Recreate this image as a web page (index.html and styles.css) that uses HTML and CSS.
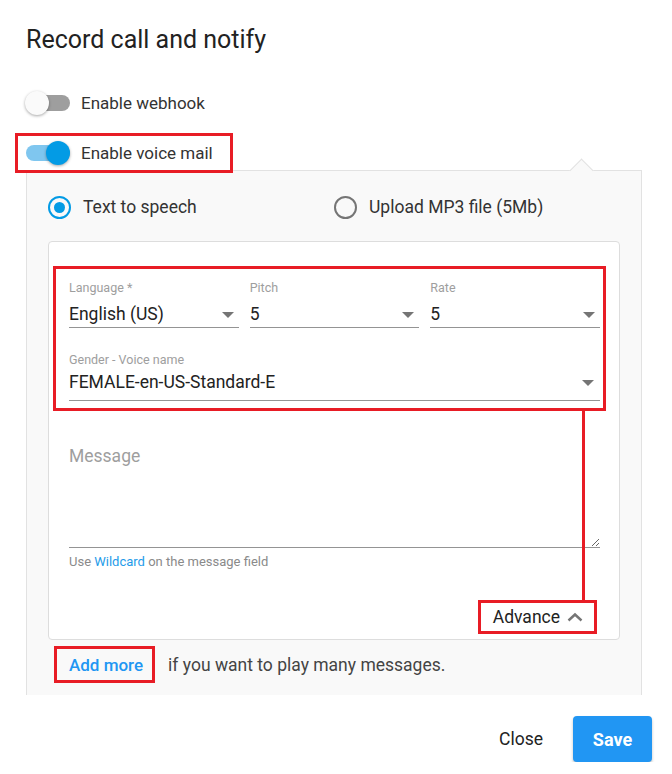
FILE: index.html
```html
<!DOCTYPE html>
<html lang="en">

<head>
    <meta charset="UTF-8">
    <meta name="viewport" content="width=device-width, initial-scale=1.0">
    <title>Record call and notify</title>
    <link rel="stylesheet" href="styles.css">
</head>

<body>
    <div class="dialog">
        <h2 class="title">Record call and notify</h2>

        <label class="toggle-row">
            <span class="switch"><span class="track"></span><span class="knob"></span></span>
            Enable webhook
        </label>
        <label class="toggle-row on marked">
            <span class="switch"><span class="track"></span><span class="knob"></span></span>
            Enable voice mail
        </label>

        <div class="panel">
            <div class="radios">
                <label class="radio checked"><span class="circle"></span>Text to speech</label>
                <label class="radio"><span class="circle"></span>Upload MP3 file (5Mb)</label>
            </div>

            <div class="card">
                <div class="fields marked">
                    <div class="field-row">
                        <div class="field">
                            <div class="field-label">Language *</div>
                            <div class="select">English (US)<span class="caret"></span></div>
                        </div>
                        <div class="field">
                            <div class="field-label">Pitch</div>
                            <div class="select">5<span class="caret"></span></div>
                        </div>
                        <div class="field">
                            <div class="field-label">Rate</div>
                            <div class="select">5<span class="caret"></span></div>
                        </div>
                    </div>
                    <div class="field voice">
                        <div class="field-label">Gender - Voice name</div>
                        <div class="select">FEMALE-en-US-Standard-E<span class="caret"></span></div>
                    </div>
                </div>

                <textarea class="message" placeholder="Message"></textarea>
                <div class="hint">Use <a href="#">Wildcard</a> on the message field</div>

                <div class="advance-row">
                    <span class="advance marked">Advance
                        <svg width="16" height="10" viewBox="0 0 16 10">
                            <polyline points="1.5,8.5 8,2.5 14.5,8.5" fill="none" stroke="#757575" stroke-width="2.4" />
                        </svg>
                    </span>
                </div>
            </div>

            <div class="add-row">
                <a href="#" class="add-more marked">Add more</a>
                <span>if you want to play many messages.</span>
            </div>
        </div>

        <div class="footer">
            <button class="btn-close">Close</button>
            <button class="btn-save">Save</button>
        </div>
    </div>
</body>

</html>
```

FILE: styles.css
```css
body {
    margin: 0;
    font-family: Roboto, "Liberation Sans", Arial, sans-serif;
    color: #333;
    background: #fff;
}

.dialog {
    padding: 25px 20px 0 26px;
}

.title {
    margin: 0;
    font-size: 25px;
    line-height: 30px;
    font-weight: 400;
    color: #222;
}

.marked {
    outline: 3px solid #e81c25;
}

/* switches */
.toggle-row {
    display: flex;
    align-items: center;
    height: 34px;
    font-size: 17px;
    color: #333;
}

.toggle-row:first-of-type {
    margin-top: 31px;
}

.toggle-row + .toggle-row {
    margin-top: 16px;
}

.toggle-row.marked {
    width: 204px;
    margin-left: -8px;
    padding-left: 8px;
    position: relative;
    z-index: 2;
}

.switch {
    position: relative;
    width: 44px;
    height: 24px;
    margin-right: 11px;
}

.track {
    position: absolute;
    left: 0;
    top: 4px;
    width: 44px;
    height: 16px;
    border-radius: 8px;
    background-color: #9e9e9e;
}

.knob {
    position: absolute;
    left: -1px;
    top: 0;
    width: 24px;
    height: 24px;
    border-radius: 50%;
    background-color: #fafafa;
    box-shadow: 0 1px 3px rgba(0, 0, 0, 0.35);
}

.on .track {
    background-color: #7fc6ef;
}

.on .knob {
    left: 20px;
    background-color: #039be5;
}

/* panel */
.panel {
    position: relative;
    margin-right: 10px;
    padding: 24px 21px 15px;
    background-color: #f9f9f9;
    border: 1px solid #e2e2e2;
    border-bottom: none;
}

.panel::before {
    content: '';
    position: absolute;
    top: -9px;
    left: 546px;
    width: 16px;
    height: 16px;
    background-color: #f9f9f9;
    border-top: 1px solid #e2e2e2;
    border-left: 1px solid #e2e2e2;
    transform: rotate(45deg);
}

.radios {
    display: flex;
    height: 24px;
    font-size: 17.5px;
    color: #333;
}

.radio {
    display: flex;
    align-items: center;
    width: 287px;
}

.circle {
    box-sizing: border-box;
    width: 23px;
    height: 23px;
    border: 2px solid #757575;
    border-radius: 50%;
    margin-right: 12px;
    position: relative;
}

.radio.checked .circle {
    border-color: #039be5;
}

.radio.checked .circle::after {
    content: '';
    position: absolute;
    left: 4px;
    top: 4px;
    width: 11px;
    height: 11px;
    border-radius: 50%;
    background-color: #039be5;
}

.card {
    margin-top: 22px;
    padding: 27px 19px 8px 20px;
    background-color: #fff;
    border: 1px solid #ddd;
    border-radius: 4px;
}

/* selects */
.fields {
    margin: 0 -3px 0 -13px;
    padding: 11px 3px 7px 13px;
}

.field-row {
    display: grid;
    grid-template-columns: repeat(3, 1fr);
    gap: 11px;
}

.field-label {
    font-size: 12.5px;
    line-height: 16px;
    color: #9e9e9e;
}

.select {
    position: relative;
    margin-top: 6px;
    height: 25px;
    line-height: 24px;
    font-size: 17.5px;
    color: #222;
    border-bottom: 1px solid #949494;
}

.caret {
    position: absolute;
    right: 5px;
    top: 10px;
    border-left: 6px solid transparent;
    border-right: 6px solid transparent;
    border-top: 6px solid #757575;
}

.voice {
    margin-top: 24px;
}

.voice .select {
    margin-top: 2px;
    height: 30px;
}

.voice .caret {
    right: 6px;
}

/* message */
.message {
    display: block;
    box-sizing: border-box;
    width: 100%;
    height: 104px;
    margin-top: 36px;
    padding: 0;
    border: none;
    border-bottom: 1px solid #949494;
    font-family: inherit;
    font-size: 17.5px;
    line-height: 24px;
    resize: vertical;
    outline: none;
}

.message::placeholder {
    color: #9e9e9e;
}

.hint {
    margin-top: 6px;
    font-size: 13px;
    line-height: 16px;
    color: #8a8a8a;
}

.hint a {
    color: #1e9be9;
    text-decoration: none;
}

.advance-row {
    display: flex;
    justify-content: flex-end;
    margin-top: 33px;
    padding-right: 6px;
}

.advance {
    position: relative;
    display: flex;
    align-items: center;
    gap: 7px;
    height: 28px;
    padding: 0 11px 0 12px;
    font-size: 17.5px;
    color: #222;
}

.advance::before {
    content: '';
    position: absolute;
    left: 101px;
    bottom: calc(100% + 3px);
    width: 3px;
    height: 190px;
    background-color: #e81c25;
}

/* add more */
.add-row {
    display: flex;
    align-items: center;
    margin-top: 9px;
    font-size: 17.5px;
    color: #444;
}

.add-more {
    display: flex;
    align-items: center;
    height: 31px;
    margin-left: 9px;
    padding: 0 9px 0 12px;
    margin-right: 16px;
    font-size: 17px;
    color: #2196f3;
    font-weight: 500;
    text-decoration: none;
}

/* footer */
.footer {
    display: flex;
    justify-content: flex-end;
    align-items: center;
    gap: 15px;
    margin-top: 21px;
}

button {
    font-family: inherit;
    border: none;
    cursor: pointer;
    border-radius: 4px;
}

.btn-close {
    padding: 0 15px;
    height: 46px;
    background: none;
    font-size: 17.5px;
    font-weight: 400;
    color: #222;
}

.btn-save {
    width: 79px;
    height: 46px;
    background-color: #2196f3;
    color: white;
    font-size: 18px;
    font-weight: 700;
    box-shadow: 0 2px 3px rgba(0, 0, 0, 0.25);
}
```
